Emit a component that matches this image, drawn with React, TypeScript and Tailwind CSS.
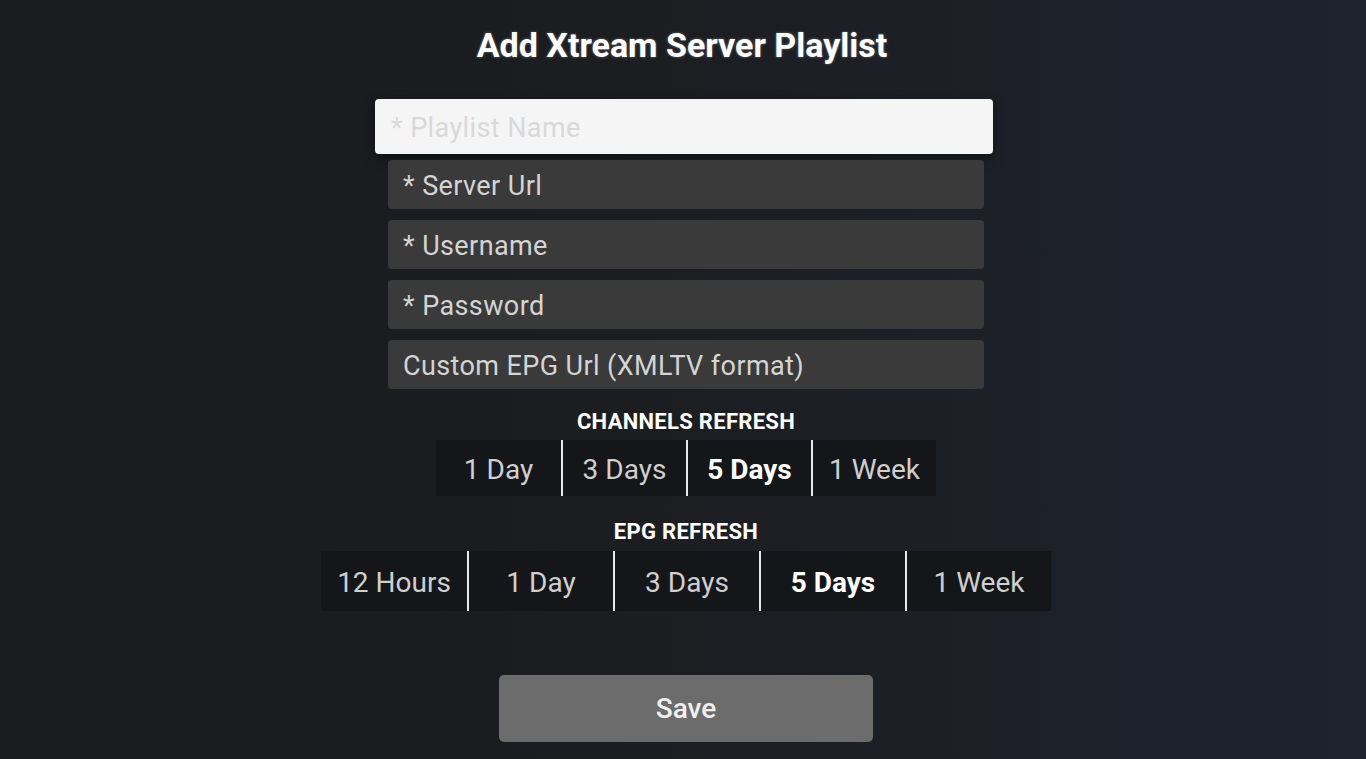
import React from "react";

const fields = ["* Server Url", "* Username", "* Password", "Custom EPG Url (XMLTV format)"];

const channelOptions = ["1 Day", "3 Days", "5 Days", "1 Week"];
const epgOptions = ["12 Hours", "1 Day", "3 Days", "5 Days", "1 Week"];

function Segmented({ options, selected, itemClass }: { options: string[]; selected: string; itemClass: string }) {
  return (
    <div className="flex bg-[#151619]">
      {options.map((opt, i) => (
        <div
          key={opt}
          className={`${itemClass} flex items-center justify-center pt-[3px] ${i > 0 ? "border-l-2 border-[#e8e8e8]" : ""}`}
        >
          <span
            className={
              opt === selected
                ? "text-[28px] font-bold text-white"
                : "text-[28px] text-[#cfcfcf]"
            }
          >
            {opt}
          </span>
        </div>
      ))}
    </div>
  );
}

export default function App() {
  return (
    <div className="w-full h-[759px] overflow-hidden flex flex-col items-center pl-[6px] bg-[linear-gradient(90deg,#1a1b1e_0%,#1c1d20_45%,#1e2330_100%)] font-['Roboto','Liberation_Sans',sans-serif]">
      <h1 className="mt-[22px] -ml-[8px] text-[34px] leading-[46px] font-bold text-white [text-shadow:0_0_3px_rgba(255,255,255,0.35)]">
        Add Xtream Server Playlist
      </h1>

      <div className="mt-[31px] -ml-[4px] w-[618px] h-[55px] rounded-[4px] bg-[#f5f5f5] shadow-[0_4px_12px_rgba(0,0,0,0.5)] flex items-center px-[16px] pt-[3px]">
        <span className="text-[27px] tracking-[0.4px] text-[#d9d9d9]">* Playlist Name</span>
      </div>

      <div className="mt-[6px] flex flex-col gap-[11px]">
        {fields.map((f) => (
          <div key={f} className="w-[596px] h-[49px] rounded-[4px] bg-[#3a3a3a] flex items-center px-[15px] pt-[4px]">
            <span className="text-[27px] tracking-[0.4px] text-[#d4d4d4]">{f}</span>
          </div>
        ))}
      </div>

      <div className="mt-[21px] text-[22px] leading-[24px] tracking-[0.3px] font-bold text-white">CHANNELS REFRESH</div>
      <div className="mt-[6px]">
        <Segmented options={channelOptions} selected="5 Days" itemClass="w-[125px] h-[56px]" />
      </div>

      <div className="mt-[24px] text-[22px] leading-[24px] tracking-[0.3px] font-bold text-white">EPG REFRESH</div>
      <div className="mt-[7px]">
        <Segmented options={epgOptions} selected="5 Days" itemClass="w-[146px] h-[60px]" />
      </div>

      <button className="mt-[64px] w-[374px] h-[67px] rounded-[5px] bg-[#6c6c6c] text-[28px] font-medium text-[#efefef]">
        Save
      </button>
    </div>
  );
}
